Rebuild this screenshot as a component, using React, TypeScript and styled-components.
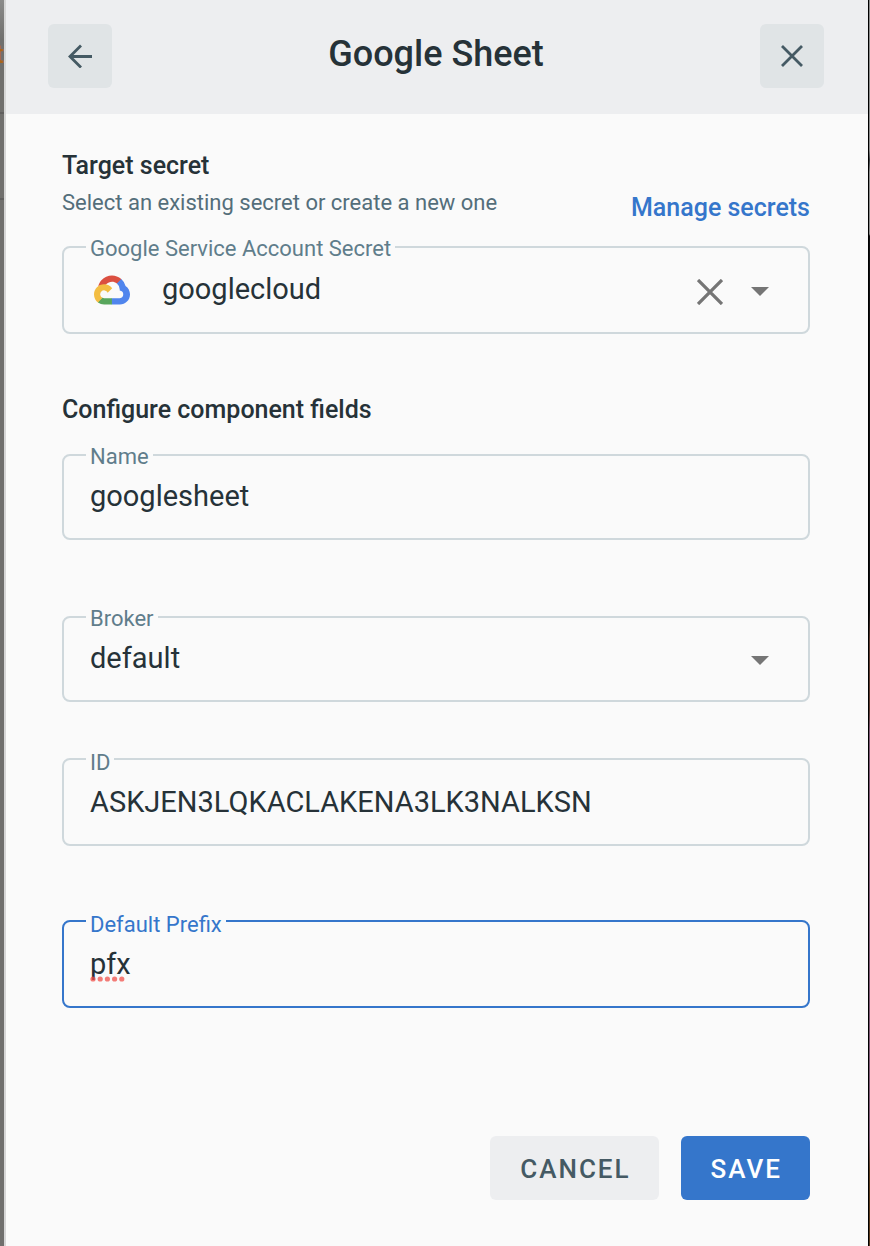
import React, { useState } from "react";
import styled, { createGlobalStyle } from "styled-components";

const GlobalStyle = createGlobalStyle`
  *, *::before, *::after { box-sizing: border-box; }
  body {
    margin: 0;
    background: #fafafa;
    color: #263238;
    font-family: Roboto, "Liberation Sans", sans-serif;
  }
  h1, h2, p { margin: 0; }
  button, input, select { font-family: inherit; color: inherit; }
`;

const Page = styled.div`
  display: grid;
  grid-template-columns: 4px minmax(0, 1fr) 2px;
  min-height: 100vh;
`;

const Backdrop = styled.div`
  overflow: hidden;
  padding-top: 38px;
  background:
    linear-gradient(#605f5e, #605f5e) 0 112px / 100% 2px no-repeat,
    linear-gradient(#605f5e, #605f5e) 0 198px / 100% 2px no-repeat,
    linear-gradient(#8b8b8a, #706f6d 40px, #706f6d);
  color: #a8661c;
  font-size: 26px;
  font-weight: 500;
  line-height: 32px;
  direction: rtl;
`;

const WindowEdge = styled.div`
  border-left: 1px solid #000000;
  background: linear-gradient(
    #8c8c8c 0 150px,
    #3c4043 160px,
    #8c8c8c 172px 234px,
    #101012 236px 610px,
    #5e3a30 640px 710px,
    #7d5874 730px 1140px,
    #5a3a1c 1170px
  );
`;

const Drawer = styled.main`
  display: flex;
  flex-direction: column;
  border-left: 2px solid #d6d6d6;
  background: #fafafa;
`;

const Header = styled.header`
  display: flex;
  align-items: flex-start;
  justify-content: space-between;
  height: 114px;
  padding: 24px 44px 0 42px;
  background: #edeef0;
`;

const Title = styled.h1`
  font-size: 36px;
  font-weight: 500;
  line-height: 60px;
`;

const IconButton = styled.button`
  display: grid;
  place-items: center;
  width: 64px;
  height: 64px;
  padding: 0;
  border: 0;
  border-radius: 6px;
  background: #e0e4e6;
  color: #455a64;
  cursor: pointer;
`;

const Form = styled.form`
  display: flex;
  flex-direction: column;
  padding: 32px 58px 46px 56px;
`;

const SectionHead = styled.div<{ $gap: number }>`
  display: flex;
  align-items: flex-end;
  justify-content: space-between;
  margin-bottom: ${(p) => p.$gap}px;
`;

const SectionTitle = styled.h2`
  font-size: 25px;
  font-weight: 500;
  line-height: 40px;
`;

const Hint = styled.p`
  color: #546e7a;
  font-size: 22px;
  line-height: 34px;
`;

const ManageLink = styled.a`
  color: #3576cb;
  font-size: 25px;
  font-weight: 500;
  line-height: 24px;
  text-decoration: none;
`;

const Field = styled.div<{ $tall?: boolean; $gap: number; $active?: boolean }>`
  position: relative;
  display: flex;
  align-items: center;
  height: ${(p) => (p.$tall ? 88 : 86)}px;
  margin-bottom: ${(p) => p.$gap}px;
  border: 2px solid ${(p) => (p.$active ? "#3576cb" : "#cfd8dc")};
  border-radius: 8px;
  color: ${(p) => (p.$active ? "#3576cb" : "#607d8b")};
`;

const FieldLabel = styled.label<{ $low?: boolean }>`
  position: absolute;
  top: ${(p) => (p.$low ? -11 : -13)}px;
  left: 22px;
  padding: 0 4px;
  background: #fafafa;
  font-size: 22px;
  line-height: 28px;
`;

const TextInput = styled.input<{ $low?: boolean }>`
  flex: 1;
  min-width: 0;
  height: 100%;
  padding: 0 26px ${(p) => (p.$low ? 0 : 2)}px;
  border: 0;
  outline: 0;
  background: transparent;
  color: #263238;
  font-size: 29px;
`;

const SelectInput = styled.select<{ $withIcon?: boolean }>`
  flex: 1;
  min-width: 0;
  height: 100%;
  padding: 0 26px 2px ${(p) => (p.$withIcon ? 32 : 26)}px;
  border: 0;
  outline: 0;
  appearance: none;
  background: transparent;
  color: #263238;
  font-size: 29px;
`;

const Leading = styled.span`
  display: flex;
  margin-left: 30px;
`;

const ClearButton = styled.button`
  display: flex;
  margin-right: 28px;
  padding: 3px 0 0;
  border: 0;
  background: transparent;
  cursor: pointer;
`;

const Caret = styled.span`
  display: flex;
  margin-right: 39px;
  padding-top: 3px;
  pointer-events: none;
`;

const SpellingMark = styled.svg`
  position: absolute;
  top: 54px;
  left: 26px;
`;

const Actions = styled.div`
  display: flex;
  justify-content: flex-end;
  gap: 22px;
`;

const ActionButton = styled.button<{ $primary?: boolean }>`
  height: 64px;
  padding: 2px 28px 0 30px;
  border: 0;
  border-radius: 6px;
  background: ${(p) => (p.$primary ? "#3576cb" : "#edeef0")};
  color: ${(p) => (p.$primary ? "#ffffff" : "#455a64")};
  font-size: 26px;
  font-weight: 500;
  letter-spacing: 2px;
  cursor: pointer;
`;

const BackIcon = () => (
  <svg width="24" height="24" viewBox="0 0 24 24" fill="none" stroke="currentColor" strokeWidth="2.8" aria-hidden="true">
    <path d="M24 12.5H2M13 1.5L2 12.5l11 11" />
  </svg>
);

const CrossIcon = ({ size, color, weight }: { size: number; color: string; weight: number }) => (
  <svg width={size} height={size} viewBox={`0 0 ${size} ${size}`} fill="none" stroke={color} strokeWidth={weight} aria-hidden="true">
    <path d={`M1 1L${size - 1} ${size - 1}M${size - 1} 1L1 ${size - 1}`} />
  </svg>
);

const CaretIcon = () => (
  <svg width="18" height="9" viewBox="0 0 18 9" fill="#757575" aria-hidden="true">
    <path d="M0 0h18L9 9z" />
  </svg>
);

const CloudLogo = () => (
  <svg width="36" height="30" viewBox="0 0 256 206" aria-hidden="true">
    <path fill="#db4f40" d="M170.25 56.82l22.25-22.25 1.49-9.37C153.44-11.68 88.98-7.5 52.42 33.92 42.27 45.42 34.73 59.76 30.72 74.57l7.97-1.12 44.5-7.34 3.44-3.51c19.8-21.75 53.27-24.67 76.13-6.17z" />
    <path fill="#5085ed" d="M224.2 73.92A100.2 100.2 0 0 0 193.99 25.2l-31.23 31.23a55.5 55.5 0 0 1 20.37 44.04v5.54a27.8 27.8 0 0 1 0 55.28h-55.67l-5.47 5.93v33.34l5.47 5.24h55.67c39.93.31 72.56-31.5 72.87-71.43.19-24.2-11.75-46.89-31.8-60.45" />
    <path fill="#58a65c" d="M71.87 205.8h55.59v-44.51H71.87c-3.96 0-7.8-.85-11.4-2.5l-7.89 2.42-22.4 22.25-1.96 7.58a72 72 0 0 0 43.65 14.76" />
    <path fill="#f3bd42" d="M71.87 61.43C31.94 61.66-.24 94.23 0 134.16c.13 22.3 10.55 43.29 28.22 56.88l32.25-32.25a27.8 27.8 0 1 1 36.78-36.77l32.24-32.25a72.3 72.3 0 0 0-57.62-28.34" />
  </svg>
);

export default function App() {
  const [secret, setSecret] = useState("googlecloud");
  const [name, setName] = useState("googlesheet");
  const [id, setId] = useState("ASKJEN3LQKACLAKENA3LK3NALKSN");
  const [prefix, setPrefix] = useState("pfx");

  return (
    <Page>
      <GlobalStyle />
      <Backdrop aria-hidden="true">t</Backdrop>
      <Drawer>
        <Header>
          <IconButton type="button" aria-label="Back">
            <BackIcon />
          </IconButton>
          <Title>Google Sheet</Title>
          <IconButton type="button" aria-label="Close">
            <CrossIcon size={22} color="#455a64" weight={2.8} />
          </IconButton>
        </Header>
        <Form onSubmit={(e) => e.preventDefault()}>
          <SectionHead $gap={26}>
            <div>
              <SectionTitle>Target secret</SectionTitle>
              <Hint>Select an existing secret or create a new one</Hint>
            </div>
            <ManageLink href="#secrets">Manage secrets</ManageLink>
          </SectionHead>
          <Field $tall $gap={56}>
            <FieldLabel htmlFor="secret">Google Service Account Secret</FieldLabel>
            <Leading>
              <CloudLogo />
            </Leading>
            <SelectInput id="secret" $withIcon value={secret} onChange={(e) => setSecret(e.target.value)}>
              <option value="" />
              <option value="googlecloud">googlecloud</option>
            </SelectInput>
            <ClearButton type="button" aria-label="Clear secret" onClick={() => setSecret("")}>
              <CrossIcon size={26} color="#757575" weight={3.3} />
            </ClearButton>
            <Caret>
              <CaretIcon />
            </Caret>
          </Field>
          <SectionHead $gap={24}>
            <SectionTitle>Configure component fields</SectionTitle>
          </SectionHead>
          <Field $gap={76}>
            <FieldLabel htmlFor="name">Name</FieldLabel>
            <TextInput id="name" value={name} onChange={(e) => setName(e.target.value)} />
          </Field>
          <Field $gap={56}>
            <FieldLabel htmlFor="broker">Broker</FieldLabel>
            <SelectInput id="broker" defaultValue="default">
              <option value="default">default</option>
            </SelectInput>
            <Caret>
              <CaretIcon />
            </Caret>
          </Field>
          <Field $tall $gap={74}>
            <FieldLabel $low htmlFor="id">ID</FieldLabel>
            <TextInput $low id="id" value={id} onChange={(e) => setId(e.target.value)} />
          </Field>
          <Field $tall $active $gap={128}>
            <FieldLabel $low htmlFor="prefix">Default Prefix</FieldLabel>
            <TextInput $low id="prefix" spellCheck={false} value={prefix} onChange={(e) => setPrefix(e.target.value)} />
            <SpellingMark width="38" height="6" viewBox="0 0 38 6" fill="#f0504a" fillOpacity="0.75" aria-hidden="true">
              {[3, 10.2, 17.4, 24.6, 31.8].map((x) => (
                <circle key={x} cx={x} cy="3" r="2.6" />
              ))}
            </SpellingMark>
          </Field>
          <Actions>
            <ActionButton type="button">CANCEL</ActionButton>
            <ActionButton type="submit" $primary>
              SAVE
            </ActionButton>
          </Actions>
        </Form>
      </Drawer>
      <WindowEdge />
    </Page>
  );
}
